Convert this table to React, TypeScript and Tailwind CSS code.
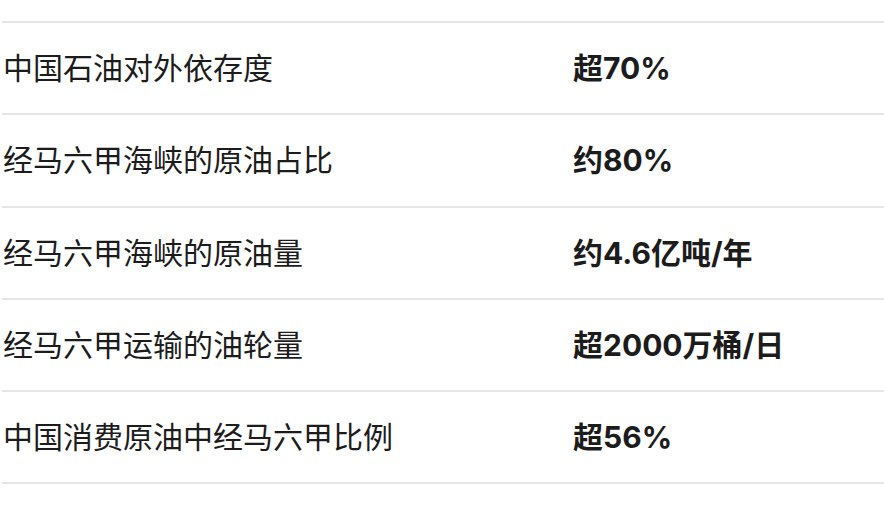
import React from "react";

const rows: [string, string][] = [
  ["中国石油对外依存度", "超70%"],
  ["经马六甲海峡的原油占比", "约80%"],
  ["经马六甲海峡的原油量", "约4.6亿吨/年"],
  ["经马六甲运输的油轮量", "超2000万桶/日"],
  ["中国消费原油中经马六甲比例", "超56%"],
];

export default function App() {
  return (
    <div
      className="w-[884px] h-[510px] bg-white pt-[21px] pl-[2px] text-[#1c1c1c] overflow-hidden"
      style={{ fontFamily: '"Inter", "Noto Sans CJK SC", sans-serif' }}
    >
      <div className="border-t-2 border-[#e6e6e6]">
        {rows.map(([k, v]) => (
          <div
            key={k}
            className="flex items-center h-[92.3px] border-b-2 border-[#e6e6e6] text-[30px] leading-none"
          >
            <div className="w-[571px] pl-[1px] font-normal">{k}</div>
            <div className="font-bold">{v}</div>
          </div>
        ))}
      </div>
    </div>
  );
}
